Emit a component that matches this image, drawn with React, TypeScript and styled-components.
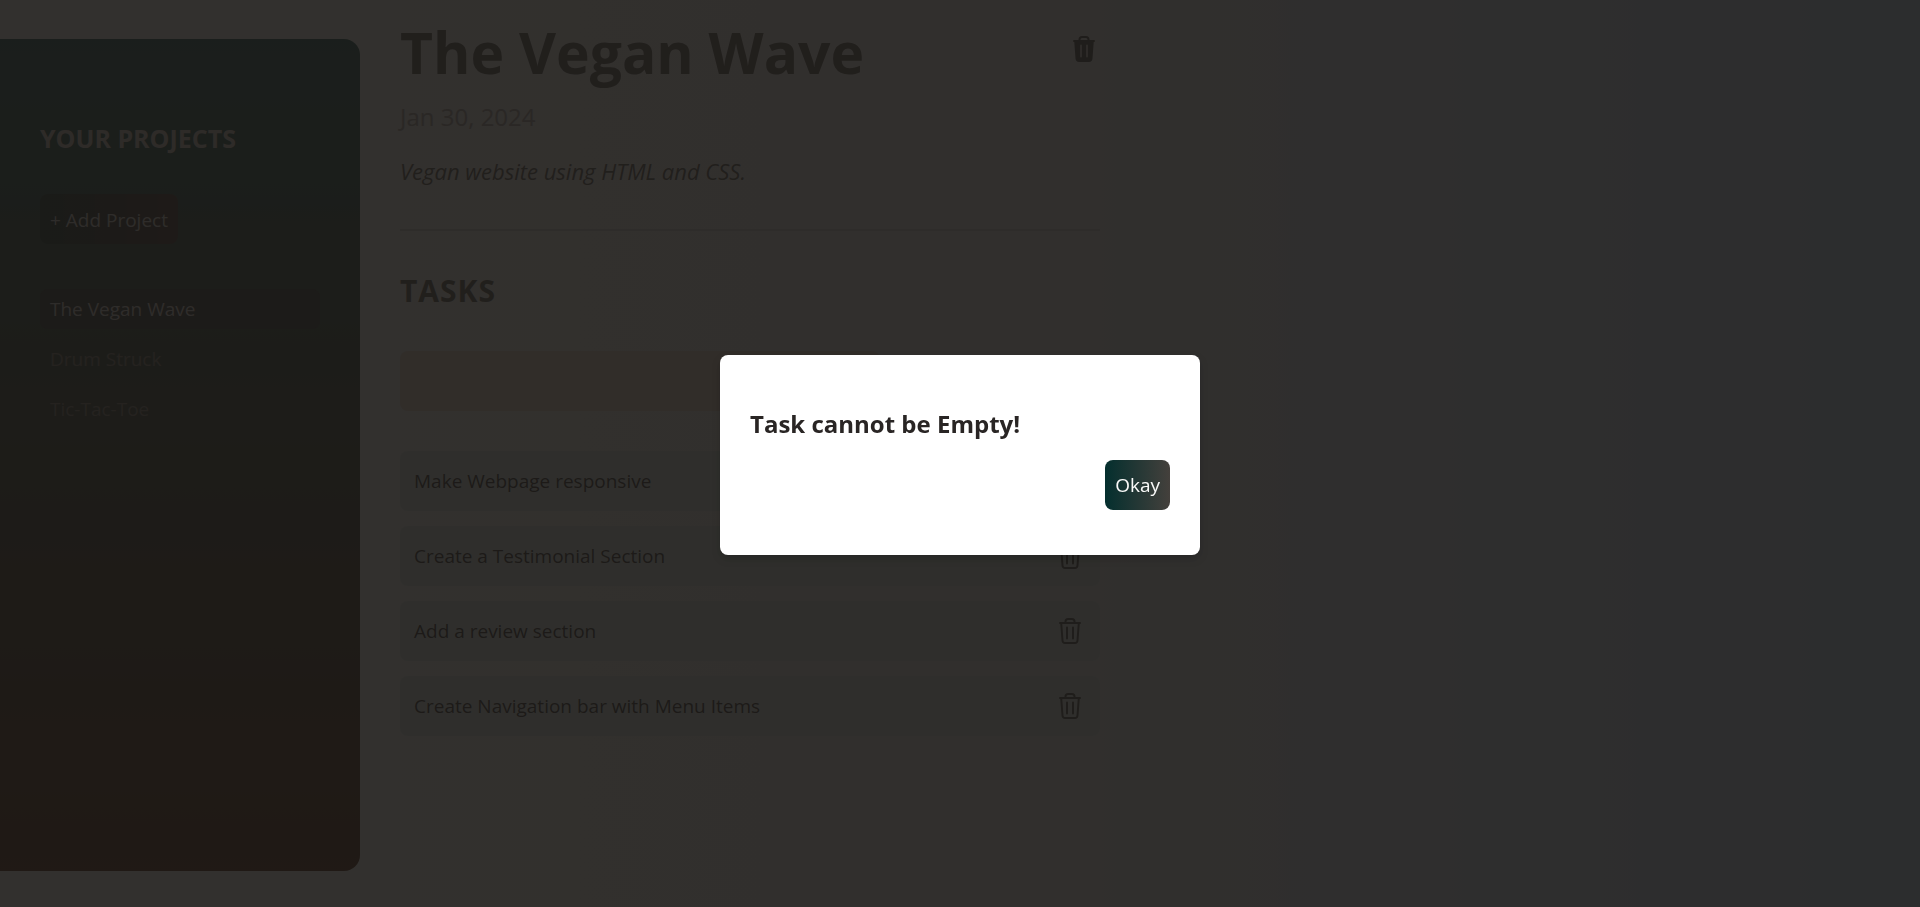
import React, { useState } from "react";
import styled, { createGlobalStyle } from "styled-components";

const GlobalStyle = createGlobalStyle`
  *, *::before, *::after { box-sizing: border-box; }
  body {
    margin: 0;
    font-family: "Open Sans", "Noto Sans", sans-serif;
    font-size: 19px;
    line-height: 30px;
    color: #292524;
  }
  h1, h2, h3, p, ul { margin: 0; padding: 0; }
  ul { list-style: none; }
  button, input { font: inherit; color: inherit; border: 0; }
  button { cursor: pointer; }
`;

const Page = styled.div`
  display: flex;
  gap: 40px;
  min-height: 100vh;
  background: linear-gradient(to right, #fafaf9, #f5f5f4 50%, #bedafc);
`;

const Sidebar = styled.aside`
  flex: 0 0 360px;
  margin: 39px 0 36px;
  padding: 80px 40px;
  border-radius: 0 16px 16px 0;
  background: linear-gradient(#134e4a, #451a03);
`;

const SidebarTitle = styled.h2`
  font-size: 25px;
  font-weight: 700;
  line-height: 38px;
  color: #d6c9c4;
`;

const GradientButton = styled.button`
  height: 50px;
  padding: 0 10px;
  border-radius: 8px;
  background: linear-gradient(to right, #042f2e, #44403c);
  color: #fafaf9;
`;

const AddProject = styled(GradientButton)`
  margin: 37px 0 45px;
  padding-top: 2px;
  background: linear-gradient(to right, #0c2824, #38261e);
  color: #d6d3d1;
`;

const ProjectList = styled.ul`
  display: flex;
  flex-direction: column;
  gap: 10px;
`;

const ProjectButton = styled.button<{ $active: boolean }>`
  width: 100%;
  height: 40px;
  padding: 0 10px;
  border-radius: 8px;
  text-align: left;
  background: ${(p) => (p.$active ? "#262828" : "transparent")};
  color: ${(p) => (p.$active ? "#d6d3d1" : "#78716c")};
`;

const Main = styled.main`
  flex: 0 1 700px;
  padding-top: 12px;
`;

const Header = styled.header`
  padding-bottom: 40px;
  border-bottom: 2px solid #d6d3d1;
`;

const TitleRow = styled.div`
  display: flex;
  align-items: center;
  justify-content: space-between;
`;

const Title = styled.h1`
  font-size: 57px;
  font-weight: 700;
  line-height: 80px;
  color: #57534e;
`;

const DateLine = styled.p`
  font-size: 24px;
  line-height: 50px;
  color: #a8a29e;
`;

const Description = styled.p`
  margin-top: 11px;
  font-size: 22px;
  font-style: italic;
  line-height: 36px;
  color: #57534e;
`;

const IconButton = styled.button`
  display: flex;
  padding: 4px;
  background: none;
  color: #44403c;
`;

const TitleActions = styled.div`
  padding-bottom: 6px;
`;

const TasksTitle = styled.h2`
  padding: 40px 0;
  font-size: 30px;
  font-weight: 700;
  line-height: 40px;
  letter-spacing: 1px;
  color: #57534e;
`;

const TaskInput = styled.input`
  display: block;
  width: 480px;
  max-width: 100%;
  height: 60px;
  padding: 0 15px;
  border-radius: 8px;
  background: #eed9cc;
`;

const TaskList = styled.ul`
  display: flex;
  flex-direction: column;
  gap: 15px;
  margin-top: 40px;
`;

const TaskRow = styled.li`
  display: flex;
  align-items: center;
  justify-content: space-between;
  height: 60px;
  padding: 0 14px;
  border-radius: 8px;
  background: #dcecea;
  color: #292524;
`;

const Overlay = styled.div`
  position: fixed;
  inset: 0;
  display: grid;
  place-items: center;
  padding-top: 2px;
  background: rgba(28, 25, 23, 0.9);
`;

const Dialog = styled.div`
  display: flex;
  flex-direction: column;
  width: 480px;
  max-width: 100%;
  padding: 49px 30px 45px;
  border-radius: 8px;
  background: #ffffff;
  box-shadow: 0 4px 8px rgba(0, 0, 0, 0.2);
`;

const DialogTitle = styled.h3`
  margin-bottom: 16px;
  font-size: 24px;
  font-weight: 700;
  line-height: 40px;
`;

const DialogActions = styled.div`
  display: flex;
  justify-content: flex-end;
`;

function Trash({ solid = false }: { solid?: boolean }) {
  return (
    <svg
      width="24"
      height="28"
      viewBox="0 0 24 28"
      fill="none"
      stroke="currentColor"
      strokeWidth="2"
      strokeLinecap="round"
      strokeLinejoin="round"
      aria-hidden="true"
    >
      <path d="M7.500 6V4.500Q7.500 2 10 2H14Q16.500 2 16.500 4.500V6" />
      <path d="M2 6H22" />
      <path
        d="M3.200 6 4.500 23.500Q4.700 26 7 26H17Q19.300 26 19.500 23.500L20.800 6Z"
        fill={solid ? "currentColor" : "none"}
      />
      <path d="M9 10.500V21.500M15 10.500V21.500" stroke={solid ? "#c8c4c0" : "currentColor"} />
    </svg>
  );
}

const projects = ["The Vegan Wave", "Drum Struck", "Tic-Tac-Toe"];
const initialTasks = [
  "Make Webpage responsive",
  "Create a Testimonial Section",
  "Add a review section",
  "Create Navigation bar with Menu Items",
];

export default function App() {
  const [active, setActive] = useState(projects[0]);
  const [tasks, setTasks] = useState(initialTasks);
  const [open, setOpen] = useState(true);

  return (
    <>
      <GlobalStyle />
      <Page>
        <Sidebar>
          <SidebarTitle>YOUR PROJECTS</SidebarTitle>
          <AddProject type="button">+ Add Project</AddProject>
          <ProjectList>
            {projects.map((name) => (
              <li key={name}>
                <ProjectButton type="button" $active={name === active} onClick={() => setActive(name)}>
                  {name}
                </ProjectButton>
              </li>
            ))}
          </ProjectList>
        </Sidebar>
        <Main>
          <Header>
            <TitleRow>
              <Title>The Vegan Wave</Title>
              <TitleActions>
                <IconButton type="button" aria-label="Delete project">
                  <Trash solid />
                </IconButton>
              </TitleActions>
            </TitleRow>
            <DateLine>Jan 30, 2024</DateLine>
            <Description>Vegan website using HTML and CSS.</Description>
          </Header>
          <TasksTitle>TASKS</TasksTitle>
          <TaskInput type="text" aria-label="New task" />
          <TaskList>
            {tasks.map((task) => (
              <TaskRow key={task}>
                <span>{task}</span>
                <IconButton
                  type="button"
                  aria-label={`Delete ${task}`}
                  onClick={() => setTasks(tasks.filter((t) => t !== task))}
                >
                  <Trash />
                </IconButton>
              </TaskRow>
            ))}
          </TaskList>
        </Main>
      </Page>
      {open && (
        <Overlay>
          <Dialog role="dialog" aria-modal="true" aria-labelledby="dialog-title">
            <DialogTitle id="dialog-title">Task cannot be Empty!</DialogTitle>
            <DialogActions>
              <GradientButton type="button" onClick={() => setOpen(false)}>
                Okay
              </GradientButton>
            </DialogActions>
          </Dialog>
        </Overlay>
      )}
    </>
  );
}
